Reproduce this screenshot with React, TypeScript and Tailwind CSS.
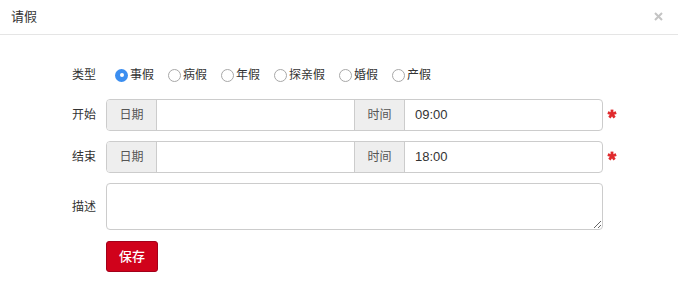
import { useState } from "react";

const types = ["事假", "病假", "年假", "探亲假", "婚假", "产假"];

function Radio({ checked }: { checked: boolean }) {
  if (checked) {
    return (
      <span className="flex h-[13px] w-[13px] items-center justify-center rounded-full bg-[#3b8ef0]">
        <span className="h-[4px] w-[4px] rounded-full bg-white" />
      </span>
    );
  }
  return <span className="h-[13px] w-[13px] rounded-full border border-[#a8a8a8] bg-white" />;
}

// bold asterisk marking a required row
function Required() {
  return (
    <svg width="10" height="10" viewBox="-5 -5 10 10" className="ml-[4px] -translate-y-[1px]">
      {[0, 72, 144, 216, 288].map((a) => (
        <line key={a} x1="0" y1="0" x2="0" y2="-4.4" stroke="#e02b2e" strokeWidth="2.8" transform={`rotate(${a})`} />
      ))}
    </svg>
  );
}

function TimeRow({ label, time }: { label: string; time: string }) {
  return (
    <div className="flex h-[32px] items-center">
      <div className="w-[96px] text-right text-[12px] text-[#333]">{label}</div>
      <div className="ml-[10px] flex h-full w-[497px] overflow-hidden rounded-[4px] border border-[#ccc]">
        <span className="flex w-[50px] items-center justify-center border-r border-[#ccc] bg-[#eee] text-[12px] text-[#555]">
          日期
        </span>
        <input className="min-w-0 flex-1 px-[10px] text-[13px] outline-none" />
        <span className="flex w-[51px] items-center justify-center border-x border-[#ccc] bg-[#eee] text-[12px] text-[#555]">
          时间
        </span>
        <input
          className="min-w-0 flex-1 px-[10px] text-[13px] text-[#333] outline-none"
          defaultValue={time}
        />
      </div>
      <Required />
    </div>
  );
}

export default function App() {
  const [type] = useState("事假");

  return (
    <div className="h-[282px] w-[678px] bg-white font-['Liberation_Sans','Noto_Sans_CJK_SC',sans-serif]">
      <div className="flex h-[35px] items-center justify-between border-b border-[#e5e5e5] pl-[11px] pr-[15px]">
        <h4 className="text-[13px] text-[#333]">请假</h4>
        <svg width="9" height="9" viewBox="0 0 9 9" className="-translate-y-[1px]">
          <path d="M1 1 L8 8 M8 1 L1 8" stroke="#c4c4c4" strokeWidth="2" />
        </svg>
      </div>

      <div className="flex flex-col pt-[29px]">
        <div className="flex h-[22px] items-center">
          <div className="w-[96px] text-right text-[12px] text-[#333]">类型</div>
          <div className="ml-[19px] flex items-center gap-[14px]">
            {types.map((t) => (
              <label key={t} className="flex items-center gap-[2px] text-[12px] text-[#333]">
                <Radio checked={t === type} />
                <span>{t}</span>
              </label>
            ))}
          </div>
        </div>

        <div className="mt-[13px] flex flex-col gap-[10px]">
          <TimeRow label="开始" time="09:00" />
          <TimeRow label="结束" time="18:00" />

          <div className="flex h-[47px] items-center">
            <div className="w-[96px] text-right text-[12px] text-[#333]">描述</div>
            <textarea className="ml-[10px] h-full w-[497px] rounded-[4px] border border-[#ccc] px-[10px] py-[6px] text-[13px] outline-none" />
          </div>

          <div className="flex pl-[106px] pt-[1px]">
            <button className="h-[31px] w-[52px] rounded-[3px] border border-[#a3001a] bg-[#d0021b] text-[13px] font-medium text-white">
              保存
            </button>
          </div>
        </div>
      </div>
    </div>
  );
}
